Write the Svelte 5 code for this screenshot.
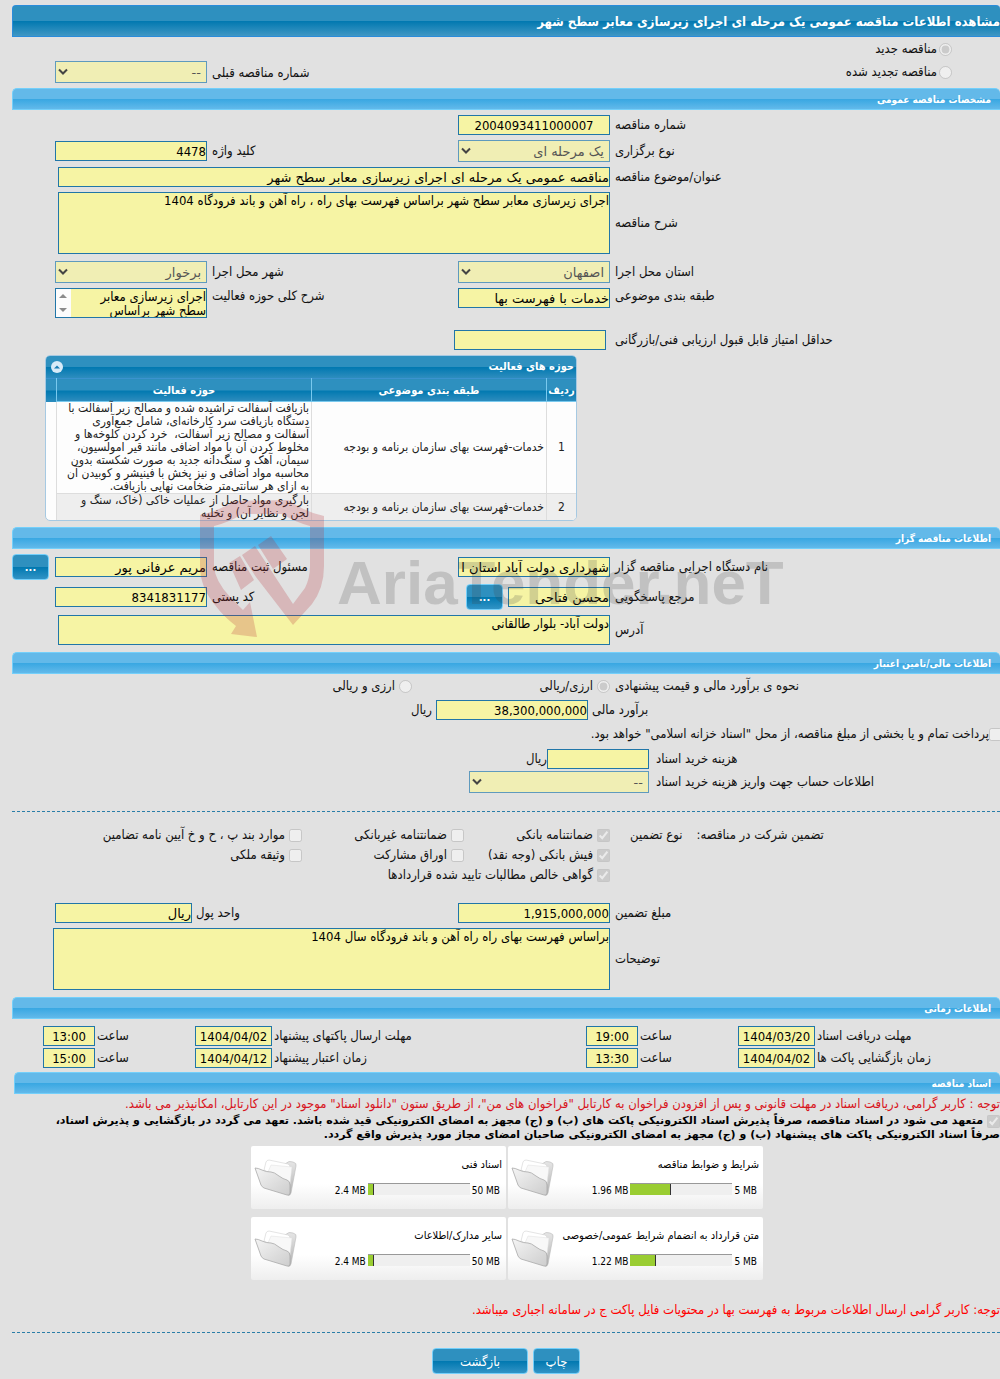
<script>
  const description = 'اجرای زیرسازی معابر سطح شهر براساس فهرست بهای راه ، راه آهن و باند فرودگاه 1404';
  const scope = 'اجرای زیرسازی معابر\nسطح شهر براساس';
  const address = 'دولت آباد- بلوار طالقانی';
  const notes = 'براساس فهرست بهای راه راه آهن و باند فرودگاه سال 1404';

  const dateRows = [
    { a: 'مهلت دریافت اسناد', ad: '1404/03/20', at: '19:00', b: 'مهلت ارسال پاکتهای پیشنهاد', bd: '1404/04/02', bt: '13:00' },
    { a: 'زمان بازگشایی پاکت ها', ad: '1404/04/02', at: '13:30', b: 'زمان اعتبار پیشنهاد', bd: '1404/04/12', bt: '15:00' }
  ];

  const guarantees = [
    [['ضمانتنامه بانکی', true], ['ضمانتنامه غیربانکی', false], ['موارد بند پ ، ح و خ آیین نامه تضامین', false]],
    [['فیش بانکی (وجه نقد)', true], ['اوراق مشارکت', false], ['وثیقه ملکی', false]],
    [['گواهی خالص مطالبات تایید شده قراردادها', true]]
  ];

  const documents = [
    { title: 'شرایط و ضوابط مناقصه', used: 1.96, max: 5 },
    { title: 'اسناد فنی', used: 2.4, max: 50 },
    { title: 'متن قرارداد به انضمام شرایط عمومی/خصوصی', used: 1.22, max: 5 },
    { title: 'سایر مدارک/اطلاعات', used: 2.4, max: 50 }
  ];

  const activities = [
    {
      category: 'خدمات-فهرست بهای سازمان برنامه و بودجه',
      lines: [
        'بازیافت آسفالت تراشیده شده و مصالح زیر آسفالت با',
        'دستگاه بازیافت سرد کارخانه‌ای، شامل جمع‌آوری',
        'آسفالت و مصالح زیر آسفالت،  خرد کردن کلوخه‌ها و',
        'مخلوط کردن آن با مواد اضافی مانند قیر امولسیون،',
        'سیمان، آهک و سنگ‌دانه جدید به صورت شکسته بدون',
        'محاسبه مواد اضافی و نیز پخش با فینیشر و کوبیدن آن',
        'به ازای هر سانتی‌متر ضخامت نهایی بازیافت.'
      ]
    },
    {
      category: 'خدمات-فهرست بهای سازمان برنامه و بودجه',
      lines: ['بارگیری مواد حاصل از عملیات خاکی (خاک، سنگ و', 'لجن و نظایر آن) و تخلیه']
    }
  ];
</script>

{#snippet dropdown(id, value)}
  <span class="select">
    <select {id} disabled><option>{value}</option></select>
    <svg viewBox="0 0 10 8" aria-hidden="true"><path d="M1 1.5 L5 5.5 L9 1.5" /></svg>
  </span>
{/snippet}

{#snippet folder()}
  <svg class="folder" viewBox="0 0 44 40" aria-hidden="true">
    <defs>
      <linearGradient id="folder-front" x1="0" y1="0" x2="1" y2="1">
        <stop offset="0" stop-color="#f4f4f4" />
        <stop offset="1" stop-color="#cdcdcd" />
      </linearGradient>
      <linearGradient id="folder-back" x1="0" y1="0" x2="0" y2="1">
        <stop offset="0" stop-color="#e6e6e6" />
        <stop offset="1" stop-color="#b0b0b0" />
      </linearGradient>
    </defs>
    <path d="M16 12 L31 6 Q35 2 39 4 Q43 5 42 8 L37 35 Q36 38 34 37 Z" fill="url(#folder-back)" stroke="#bbb" stroke-width="0.6" />
    <path d="M10 12 L12 4 Q13 2 15 2 L34 6 Q36 7 36 9 L34 24 L24 19 Z" fill="#fff" stroke="#d2d2d2" stroke-width="0.6" />
    <path d="M14 14 L17 7 L38 9 L36 26 Z" fill="#f8f8f8" stroke="#dedede" stroke-width="0.5" />
    <path d="M1 10 Q4 10 8 12 Q12 14 17 14 Q20 14 25 18 Q29 21 33 22 Q36 23 36 27 L36 35 Q36 38 33 37 L10 30 Q8 29 7 27 Z" fill="url(#folder-front)" stroke="#a9a9a9" stroke-width="0.8" />
  </svg>
{/snippet}

<main dir="rtl">
  <h1>مشاهده اطلاعات مناقصه عمومی یک مرحله ای اجرای زیرسازی معابر سطح شهر</h1>

  <div class="kind">
    <div class="kind-list">
      <label class="choice"><input type="radio" name="kind" checked disabled />مناقصه جدید</label>
      <label class="choice"><input type="radio" name="kind" disabled />مناقصه تجدید شده</label>
    </div>
    <label for="previous">شماره مناقصه قبلی</label>
    <div class="cell side">{@render dropdown('previous', '--')}</div>
  </div>

  <h2>مشخصات مناقصه عمومی</h2>
  <section class="details">
    <div class="row">
      <label class="name" for="number">شماره مناقصه</label>
      <div class="cell"><input id="number" class="center" readonly value="2004093411000007" /></div>
    </div>
    <div class="row">
      <label class="name" for="type">نوع برگزاری</label>
      <div class="cell">{@render dropdown('type', 'یک مرحله ای')}<label for="keyword">کلید واژه</label></div>
      <div class="cell side"><input id="keyword" readonly value="4478" /></div>
    </div>
    <div class="row wide">
      <label class="name" for="subject">عنوان/موضوع مناقصه</label>
      <div class="cell"><input id="subject" class="text" readonly value="مناقصه عمومی یک مرحله ای اجرای زیرسازی معابر سطح شهر" /></div>
    </div>
    <div class="row wide">
      <label class="name" for="description">شرح مناقصه</label>
      <div class="cell"><textarea id="description" class="tall" readonly value={description}></textarea></div>
    </div>
    <div class="row place">
      <label class="name" for="province">استان محل اجرا</label>
      <div class="cell">{@render dropdown('province', 'اصفهان')}<label for="city">شهر محل اجرا</label></div>
      <div class="cell side">{@render dropdown('city', 'برخوار')}</div>
    </div>
    <div class="row top">
      <label class="name" for="category">طبقه بندی موضوعی</label>
      <div class="cell"><input id="category" class="text" readonly value="خدمات با فهرست بها" /><label for="scope">شرح کلی حوزه فعالیت</label></div>
      <div class="cell side">
        <div class="scroller">
          <textarea id="scope" readonly value={scope}></textarea>
          <svg viewBox="0 0 15 28" aria-hidden="true"><path d="M3 9 L7 5 L11 9 Z M3 19 L7 23 L11 19 Z" /></svg>
        </div>
      </div>
    </div>
    <div class="row score">
      <label class="name" for="score">حداقل امتیاز قابل قبول ارزیابی فنی/بازرگانی</label>
      <div class="cell"><input id="score" readonly value="" /></div>
    </div>
  </section>

  <section class="panel">
    <header>
      <h3>حوزه های فعالیت</h3>
      <button class="collapse" aria-label="بستن"><svg viewBox="0 0 12 12" aria-hidden="true"><circle cx="6" cy="6" r="6" /><path d="M3 7.5 L6 4.5 L9 7.5 Z" /></svg></button>
    </header>
    <table>
      <thead>
        <tr><th class="index">ردیف</th><th class="group">طبقه بندی موضوعی</th><th>حوزه فعالیت</th><th class="end"></th></tr>
      </thead>
      <tbody>
        {#each activities as activity, i}
          <tr>
            <td class="index">{i + 1}</td>
            <td>{activity.category}</td>
            <td class="lines">{#each activity.lines as line}<div>{line}</div>{/each}</td>
            <td class="end"></td>
          </tr>
        {/each}
      </tbody>
    </table>
  </section>

  <h2>اطلاعات مناقصه گزار</h2>
  <section class="owner">
    <div class="row">
      <label class="name" for="agency">نام دستگاه اجرایی مناقصه گزار</label>
      <div class="cell"><input id="agency" class="text" readonly value="شهرداری دولت آباد استان ا" /><label for="registrar">مسئول ثبت مناقصه</label></div>
      <div class="cell side"><input id="registrar" class="text" readonly value="مریم عرفانی پور" /><button class="more">...</button></div>
    </div>
    <div class="row">
      <label class="name" for="contact">مرجع پاسخگویی</label>
      <div class="cell">
        <span class="pair"><input id="contact" class="text contact" readonly value="محسن فتاحی" /><button class="more">...</button></span>
        <label for="postal">کد پستی</label>
      </div>
      <div class="cell side"><input id="postal" readonly value="8341831177" /></div>
    </div>
    <div class="row wide address">
      <label class="name" for="address">آدرس</label>
      <div class="cell"><textarea id="address" readonly value={address}></textarea></div>
    </div>

    <svg class="watermark" viewBox="0 0 620 160" aria-hidden="true">
      <path class="shield" d="M10 25 Q27 22 44 11 L98 10 Q115 22 134 26 L134 76 Q134 98 122 114 L103 135 L66 87 Q60 78 52 65 L65 56 L103 114 L115 98 Q120 88 120 76 L120 36 Q105 32 92 24 L52 24 Q40 32 24 36 L24 76 Q25 91 40 107 L53 120 L60 112 L67 147 L41 144 L46 136 Q34 127 25 115 Q10 97 10 76 Z M68 55 L81 46 L97 69 L83 79 Z M39 73 L50 66 L64 90 L51 100 Z" />
      <text class="brand" x="147" y="114">AriaTender.neT</text>
    </svg>
  </section>

  <h2>اطلاعات مالی/تامین اعتبار</h2>
  <section class="finance">
    <div class="row currency">
      <span class="name">نحوه ی برآورد مالی و قیمت پیشنهادی</span>
      <label class="choice"><input type="radio" name="currency" checked disabled />ارزی/ریالی</label>
      <label class="choice"><input type="radio" name="currency" disabled />ارزی و ریالی</label>
    </div>
    <div class="row estimate">
      <label class="name" for="estimate">برآورد مالی</label>
      <div class="cell near"><input id="estimate" readonly value="38,300,000,000" /><span>ریال</span></div>
    </div>
    <label class="treasury"><input type="checkbox" disabled />پرداخت تمام و یا بخشی از مبلغ مناقصه، از محل "اسناد خزانه اسلامی" خواهد بود.</label>
    <div class="row fee">
      <label class="name" for="fee">هزینه خرید اسناد</label>
      <div class="cell near"><input id="fee" readonly value="" /><span>ریال</span></div>
    </div>
    <div class="row fee account">
      <label class="name" for="account">اطلاعات حساب جهت واریز هزینه خرید اسناد</label>
      <div class="cell">{@render dropdown('account', '--')}</div>
    </div>
  </section>

  <hr />

  <section class="guarantee">
    <div class="guarantee-kinds">
      <div class="caption"><span>تضمین شرکت در مناقصه:</span><span>نوع تضمین</span></div>
      <div class="checks">
        {#each guarantees as line}
          <div class="check-line" class:single={line.length === 1}>
            {#each line as [text, checked]}
              <label class="choice"><input type="checkbox" {checked} disabled />{text}</label>
            {/each}
          </div>
        {/each}
      </div>
    </div>
    <div class="row amount">
      <label class="name" for="amount">مبلغ تضمین</label>
      <div class="cell"><input id="amount" readonly value="1,915,000,000" /><label for="unit">واحد پول</label></div>
      <div class="cell side"><input id="unit" class="text" readonly value="ریال" /></div>
    </div>
    <div class="row wide notes">
      <label class="name" for="notes">توضیحات</label>
      <div class="cell"><textarea id="notes" class="tall" readonly value={notes}></textarea></div>
    </div>
  </section>

  <h2>اطلاعات زمانی</h2>
  <section class="times">
    {#each dateRows as row, i}
      <div class="time-row">
        <label class="name" for="a-date-{i}">{row.a}</label>
        <div class="cell"><input id="a-date-{i}" class="date" readonly value={row.ad} /><label for="a-time-{i}">ساعت</label></div>
        <div class="cell"><input id="a-time-{i}" class="time" readonly value={row.at} /><label for="b-date-{i}">{row.b}</label></div>
        <div class="cell"><input id="b-date-{i}" class="date" readonly value={row.bd} /><label for="b-time-{i}">ساعت</label></div>
        <div class="cell"><input id="b-time-{i}" class="time" readonly value={row.bt} /></div>
      </div>
    {/each}
  </section>

  <section class="documents">
    <h2>اسناد مناقصه</h2>
    <p class="warning">توجه : کاربر گرامی، دریافت اسناد در مهلت قانونی و پس از افزودن فراخوان به کارتابل "فراخوان های من"، از طریق ستون "دانلود اسناد" موجود در این کارتابل، امکانپذیر می باشد.</p>
    <label class="pledge">
      <span><input type="checkbox" checked disabled />متعهد می شود در اسناد مناقصه، صرفاً پذیرش اسناد الکترونیکی پاکت های (ب) و (ج) مجهز به امضای الکترونیکی قید شده باشد. تعهد می گردد در بازگشایی و پذیرش اسناد،</span>
      <span>صرفاً اسناد الکترونیکی پاکت های پیشنهاد (ب) و (ج) مجهز به امضای الکترونیکی صاحبان امضای مجاز مورد پذیرش واقع گردد.</span>
    </label>
    <div class="cards">
      {#each documents as doc}
        <article>
          <div class="info">
            <h4>{doc.title}</h4>
            <div class="usage">
              <span dir="ltr">{doc.max} MB</span>
              <div class="bar" dir="ltr"><div class="fill" style:width="{(doc.used / doc.max) * 100}%"></div></div>
              <span dir="ltr">{doc.used} MB</span>
            </div>
          </div>
          {@render folder()}
        </article>
      {/each}
    </div>
    <p class="warning bright">توجه: کاربر گرامی ارسال اطلاعات مربوط به فهرست بها در محتویات فایل پاکت ج در سامانه اجباری میباشد.</p>
  </section>

  <hr />

  <footer>
    <button>چاپ</button>
    <button class="back">بازگشت</button>
  </footer>
</main>

<style>
  :global(body) {
    margin: 0;
    background: #e1e1e1;
  }

  main {
    overflow: hidden;
    padding: 5px 0 5px 12px;
    font: 13px/16px 'DejaVu Sans Condensed', 'DejaVu Sans', sans-serif;
    color: #111;
    white-space: nowrap;
  }

  h1, h2, h3, h4, p { margin: 0; }

  h1 {
    box-sizing: border-box;
    height: 32px;
    border: 1px solid #2a8cdb;
    border-right: 0;
    border-radius: 4px 4px 0 0;
    background: linear-gradient(#2e90bf 0 50%, #0078b0 50%, #4097c4);
    color: #fff;
    font-size: 13px;
    line-height: 31px;
  }

  h2 {
    box-sizing: border-box;
    height: 22px;
    padding-right: 9px;
    border: 1px solid #73cffa;
    border-right: 0;
    border-radius: 5px 5px 0 0;
    background: linear-gradient(#63b9e9 0 50%, #38a7e2 50%, #62b9ea);
    color: #fff;
    font-size: 10px;
    line-height: 21px;
  }

  input, textarea, select, button { font-family: inherit; margin: 0; }

  input:not([type]), textarea {
    box-sizing: border-box;
    width: 152px;
    height: 20px;
    padding: 0;
    border: 1px solid #2176a8;
    border-radius: 0;
    background: #f6f4a4;
    color: #000;
    font-size: 13px;
    outline: none;
  }

  input.text { font-family: 'DejaVu Sans', sans-serif; }
  input.center { text-align: center; }

  textarea {
    display: block;
    height: 30px;
    padding: 1px 0;
    line-height: 14px;
    resize: none;
    overflow: hidden;
  }

  textarea.tall { height: 62px; }

  .select {
    position: relative;
    display: block;
    width: 152px;
    height: 22px;
  }

  .select select {
    box-sizing: border-box;
    width: 100%;
    height: 100%;
    padding: 0 5px;
    border: 1px solid #5f9abd;
    border-radius: 0;
    appearance: none;
    background: #f0eeb4;
    color: #555;
    font-family: 'DejaVu Sans', sans-serif;
    font-size: 13px;
    opacity: 1;
  }

  .select svg {
    position: absolute;
    left: 3px;
    top: 7px;
    width: 10px;
    height: 8px;
    fill: none;
    stroke: #444;
    stroke-width: 2;
  }

  .choice {
    display: flex;
    align-items: center;
    gap: 4px;
  }

  .choice input, .treasury input, .pledge input {
    width: 13px;
    height: 13px;
    flex: none;
  }

  .kind {
    display: grid;
    grid-template-columns: 390fr 398fr 200fr;
    align-items: end;
    padding: 4px 0 5px;
  }

  .kind > label { padding-bottom: 2px; text-align: end; }

  .kind-list {
    display: grid;
    gap: 7px;
    padding: 0 48px 3px 0;
  }

  .kind .choice { gap: 2px; }

  .row {
    display: grid;
    grid-template-columns: 390fr 398fr 200fr;
    align-items: center;
  }

  .row.wide { grid-template-columns: 390fr 598fr; }
  .row.wide .cell { padding-left: 46px; }
  .row.wide input, .row.wide textarea { width: 100%; }

  .name {
    padding-left: 5px;
    text-align: end;
  }

  .cell {
    display: flex;
    align-items: center;
    justify-content: space-between;
  }

  .side { padding-right: 5px; }

  .details {
    display: grid;
    gap: 5px;
    padding: 5px 0;
  }

  .place { padding-top: 2px; }
  .top, .top .cell { align-items: start; }
  .score { padding-top: 7px; }
  .score .cell { padding-right: 4px; }

  .scroller {
    box-sizing: border-box;
    display: flex;
    width: 152px;
    border: 1px solid #2176a8;
  }

  .scroller textarea {
    flex: 1;
    min-width: 0;
    height: 28px;
    border: 0;
  }

  .scroller svg {
    width: 15px;
    height: 28px;
    background: #fcfcfc;
    fill: #8b8b8b;
  }

  .panel {
    overflow: hidden;
    margin: 0 423px 6px 33px;
    border: 1px solid #a6c9e2;
    border-radius: 5px;
    background: #fdfdfd;
    color: #222;
  }

  .panel header {
    display: flex;
    align-items: center;
    justify-content: space-between;
    height: 22px;
    padding: 0 2px 0 5px;
    background: linear-gradient(#2e90bf 0 50%, #0078b0 50%, #2e8dbe);
    color: #fff;
  }

  h3 { font-size: 11px; }

  .collapse {
    width: 12px;
    height: 12px;
    padding: 0;
    border: 0;
    background: none;
  }

  .collapse svg { display: block; fill: #d9ebf8; }
  .collapse path { fill: #1a7cb2; }

  table {
    width: 100%;
    border-collapse: collapse;
    table-layout: fixed;
    font-size: 12px;
    line-height: 13px;
  }

  th {
    height: 22px;
    padding: 0;
    border-left: 1px solid #79c9ee;
    border-top: 1px solid #3a93cf;
    border-bottom: 1px solid #79c9ee;
    background: linear-gradient(#2e90bf 0 50%, #0078b0 50%, #2e8dbe);
    color: #fff;
    font-size: 11px;
  }

  td {
    padding: 0 2px;
    border-left: 1px solid #ddd;
    border-bottom: 1px solid #ddd;
  }

  tr:last-child td { border-bottom: 0; }
  tbody tr:nth-child(2) td:not(.end) { background: #eee; }
  .index { width: 29px; text-align: center; padding: 0; }
  .group { width: 234px; }
  .end { width: 10px; padding: 0; border-left: 0; border-bottom: 0; }
  .lines { white-space: pre; }

  button {
    border: 1px solid #73cffa;
    border-radius: 4px;
    background: linear-gradient(#2e90bf 0 50%, #0078b0 50%, #3193c5);
    color: #fff;
    font-size: 13px;
  }

  .more {
    width: 37px;
    height: 26px;
    padding: 0;
    font-size: 11px;
    font-weight: bold;
  }

  .owner {
    position: relative;
    display: grid;
    gap: 4px;
    padding: 5px 0 7px;
  }

  .address { padding-top: 1px; }
  .pair { display: flex; align-items: center; gap: 5px; }
  input.contact:not([type]) { width: 102px; }

  .watermark {
    position: absolute;
    left: 178px;
    top: -59px;
    width: 620px;
    height: 160px;
    pointer-events: none;
    direction: ltr;
  }

  .shield { fill: #b52a32; opacity: 0.23; }

  .brand {
    fill: #444;
    opacity: 0.2;
    font: bold 62px 'Liberation Sans', sans-serif;
  }

  .finance { padding: 4px 0 6px; }
  .row.currency { grid-template-columns: 390fr 198fr 400fr; }
  .row.estimate { grid-template-columns: 412fr 576fr; padding: 6px 0 2px; }
  .estimate .name { padding-left: 4px; }
  .near { justify-content: start; gap: 4px; }

  .treasury {
    display: flex;
    align-items: center;
    height: 24px;
    margin-bottom: 3px;
  }

  .treasury input { margin-right: -2px; }
  .row.fee { grid-template-columns: 351fr 637fr; }
  .fee .name { padding-left: 7px; }
  .fee .near { gap: 0; }
  .fee input:not([type]) { width: 102px; }
  .account { padding-top: 2px; }
  .account .select { width: 180px; }

  hr {
    height: 0;
    margin: 12px 0 13px;
    border: 0;
    border-top: 1px dashed #2a7ea8;
  }

  .guarantee-kinds {
    display: grid;
    grid-template-columns: 390fr 598fr;
  }

  .caption {
    display: flex;
    justify-content: end;
    gap: 14px;
    padding: 2px 0 0 20px;
  }

  .check-line {
    display: grid;
    grid-template-columns: 146fr 162fr 290fr;
    height: 20px;
  }

  .check-line.single { grid-template-columns: 1fr; }
  .row.amount { grid-template-columns: 390fr 414fr 184fr; padding: 18px 0 5px; }
  .amount .side { padding-right: 4px; }
  .amount .side input:not([type]) { width: 137px; }
  .row.notes { padding-bottom: 7px; }
  .row.notes .cell { padding-left: 41px; }

  .times {
    display: grid;
    gap: 2px;
    padding: 7px 0 4px;
  }

  .time-row {
    display: grid;
    grid-template-columns: 183fr 177fr 366fr 177fr 85fr;
    align-items: center;
  }

  .time-row .name { padding: 0; }
  .time-row .cell { padding-right: 2px; }
  input.date:not([type]) { width: 77px; text-align: center; }
  input.time:not([type]) { width: 52px; text-align: center; }

  .documents h2 { margin-left: 2px; }

  .warning {
    color: #d8141c;
    line-height: 20px;
  }

  .warning.bright { padding-top: 20px; color: #f00; }

  .pledge {
    display: block;
    color: #000;
    font: bold 11px/14px 'DejaVu Sans', sans-serif;
  }

  .pledge span { display: flex; align-items: center; gap: 4px; }

  .cards {
    display: grid;
    grid-template-columns: 255px 255px;
    gap: 8px 2px;
    padding: 4px 237px 0 0;
  }

  article {
    box-sizing: border-box;
    display: flex;
    align-items: center;
    height: 63px;
    padding: 0 4px 0 3px;
    border-radius: 2px;
    background: linear-gradient(#fff 60%, #eee);
    color: #000;
    font-size: 10px;
  }

  .info { flex: 1; min-width: 0; }

  h4 {
    margin-bottom: 10px;
    font-size: 11px;
    font-weight: normal;
  }

  .usage {
    display: flex;
    gap: 2px;
    padding-right: 2px;
  }

  .bar {
    width: 102px;
    height: 11px;
    border-top: 1px solid #999;
    background: #efefef;
  }

  .fill {
    height: 11px;
    border-right: 1px solid #333;
    background: #9acd32;
  }

  .folder { width: 44px; height: 40px; flex: none; }

  footer {
    display: flex;
    justify-content: center;
    gap: 5px;
    padding-top: 2px;
  }

  footer button { min-width: 47px; height: 26px; padding: 0; }
  footer .back { min-width: 96px; }
</style>
